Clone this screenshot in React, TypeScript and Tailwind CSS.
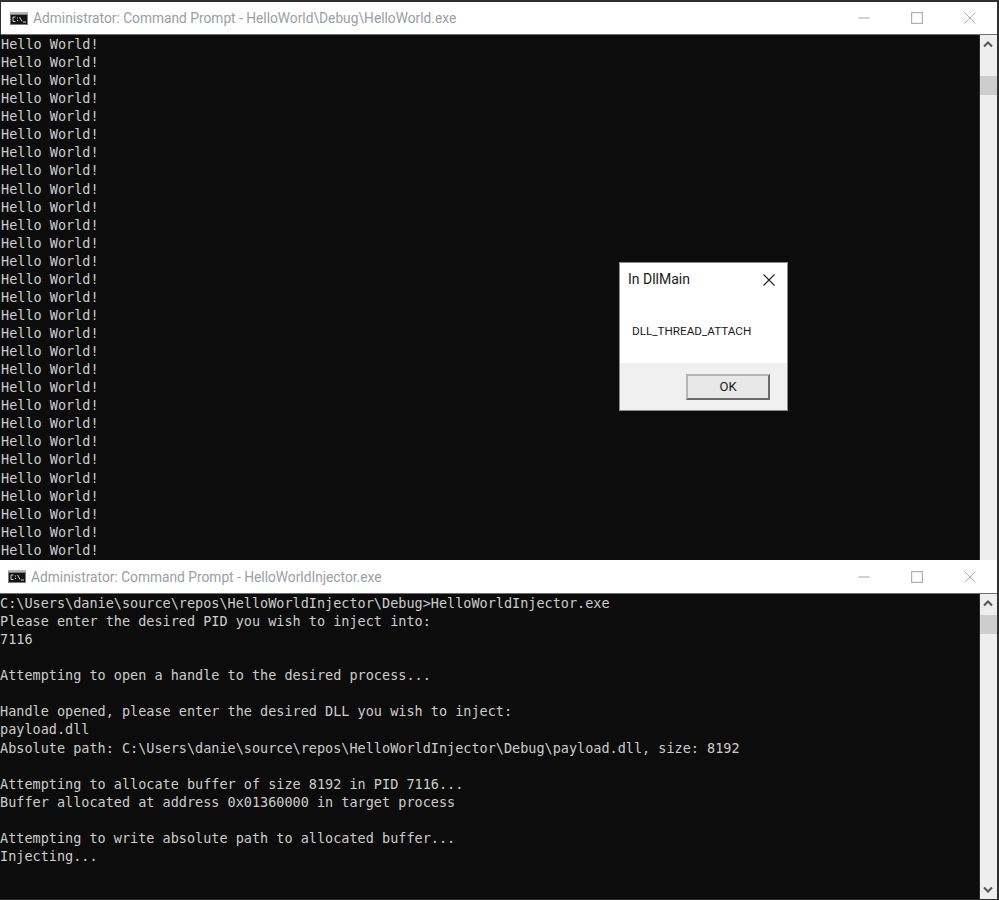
const bottomLines = [
  'C:\\Users\\danie\\source\\repos\\HelloWorldInjector\\Debug>HelloWorldInjector.exe',
  'Please enter the desired PID you wish to inject into:',
  '7116',
  '',
  'Attempting to open a handle to the desired process...',
  '',
  'Handle opened, please enter the desired DLL you wish to inject:',
  'payload.dll',
  'Absolute path: C:\\Users\\danie\\source\\repos\\HelloWorldInjector\\Debug\\payload.dll, size: 8192',
  '',
  'Attempting to allocate buffer of size 8192 in PID 7116...',
  'Buffer allocated at address 0x01360000 in target process',
  '',
  'Attempting to write absolute path to allocated buffer...',
  'Injecting...',
];

const helloLines = Array.from({ length: 29 }, () => 'Hello World!');

function CmdIcon() {
  return (
    <svg width="18" height="13" viewBox="0 0 18 13" className="shrink-0">
      <rect x="0" y="0" width="18" height="13" fill="#7d7d7d" />
      <rect x="0" y="0" width="18" height="2" fill="#b5b5b5" />
      <rect x="1" y="3" width="16" height="9" fill="#141414" />
      <path d="M5.5 5H3V9.5H5.5M7.5 5.5V6.5M7.5 8V9M9.5 5L12 9.5M13 10H16" fill="none" stroke="#d0d0d0" strokeWidth="1" />
    </svg>
  );
}

function WindowControls() {
  return (
    <div className="flex items-center shrink-0">
      <svg width="12" height="12" viewBox="0 0 12 12" className="mr-[41px]">
        <path d="M0.5 6H11.5" stroke="#b0b0b0" strokeWidth="1.2" />
      </svg>
      <svg width="12" height="12" viewBox="0 0 12 12" className="mr-[41px]">
        <rect x="0.6" y="0.6" width="10.8" height="10.8" fill="none" stroke="#b0b0b0" strokeWidth="1.2" />
      </svg>
      <svg width="12" height="12" viewBox="0 0 12 12" className="mr-[21px]">
        <path d="M0.5 0.5L11.5 11.5M11.5 0.5L0.5 11.5" stroke="#b0b0b0" strokeWidth="1" />
      </svg>
    </div>
  );
}

function TitleBar({ title, className }: { title: string; className: string }) {
  return (
    <div className={`flex items-center justify-between bg-white border-b border-[#6e6e6e] ${className}`}>
      <div className="flex items-center gap-[5px] text-[13.75px] text-[#9ba0a5] font-['Roboto',sans-serif] whitespace-nowrap">
        <CmdIcon />
        <span className="pt-[1px]">{title}</span>
      </div>
      <WindowControls />
    </div>
  );
}

function Scrollbar({ thumbTop, downArrow }: { thumbTop: string; downArrow: boolean }) {
  return (
    <div className="flex flex-col w-[18px] shrink-0 bg-[#eeeeee] border-l border-[#2a2a2a]">
      <div className="flex items-center justify-center h-[17px] pt-[2px] pr-[1px]">
        <svg width="10" height="7" viewBox="0 0 10 7">
          <path d="M1 5.5L5 1.5L9 5.5" fill="none" stroke="#555555" strokeWidth="2" />
        </svg>
      </div>
      <div className={`h-[19px] bg-[#cdcdcd] ${thumbTop}`} />
      <div className="flex-1" />
      {downArrow && (
        <div className="flex items-center justify-center h-[17px] pb-[2px] pr-[1px]">
          <svg width="10" height="7" viewBox="0 0 10 7">
            <path d="M1 1.5L5 5.5L9 1.5" fill="none" stroke="#555555" strokeWidth="2" />
          </svg>
        </div>
      )}
    </div>
  );
}

function Console({
  lines,
  height,
  thumbTop,
  downArrow,
  textInset,
}: {
  lines: string[];
  height: string;
  thumbTop: string;
  downArrow: boolean;
  textInset: string;
}) {
  return (
    <div className={`flex ${height}`}>
      <div className={`flex-1 overflow-hidden bg-[#0c0c0c] text-[#cccccc] text-[13.5px] leading-[18.07px] font-['DejaVu_Sans_Mono',monospace] ${textInset}`}>
        {lines.map((line, i) => (
          <div key={i} className="h-[18.07px] whitespace-pre">
            {line}
          </div>
        ))}
      </div>
      <Scrollbar thumbTop={thumbTop} downArrow={downArrow} />
    </div>
  );
}

function MessageBox() {
  return (
    <div className="absolute left-[619px] top-[262px] w-[169px] h-[149px] flex flex-col bg-white border border-[#8c8c8c] font-['Roboto',sans-serif] text-[#1a1a1a]">
      <div className="flex items-center justify-between pl-[8px] pr-[12px] pt-[6px] text-[14px]">
        <span>In DllMain</span>
        <svg width="12" height="12" viewBox="0 0 12 12">
          <path d="M0.5 0.5L11.5 11.5M11.5 0.5L0.5 11.5" stroke="#222222" strokeWidth="1.1" />
        </svg>
      </div>
      <div className="flex-1 pl-[12px] pt-[33px] text-[11.7px]">DLL_THREAD_ATTACH</div>
      <div className="flex items-center justify-end h-[47px] pr-[17px] bg-[#f0f0f0]">
        <div className="flex items-center justify-center w-[84px] h-[26px] bg-[#e8e8e8] border-2 border-t-[#b5b5b5] border-l-[#b5b5b5] border-r-[#6a6a6a] border-b-[#6a6a6a] text-[13px]">
          OK
        </div>
      </div>
    </div>
  );
}

export default function App() {
  return (
    <div className="relative w-[999px] h-[900px] overflow-hidden bg-[#2e2e2e] pt-[2px] pr-[2px]">
      <TitleBar title="Administrator: Command Prompt - HelloWorld\Debug\HelloWorld.exe" className="h-[33px] ml-[1px] pl-[9px]" />
      <Console lines={helloLines} height="h-[525px]" thumbTop="mt-[24px]" downArrow={false} textInset="pl-[1px]" />
      <TitleBar title="Administrator: Command Prompt - HelloWorldInjector.exe" className="h-[34px] pl-[8px]" />
      <Console lines={bottomLines} height="h-[305px]" thumbTop="mt-[4px]" downArrow textInset="pl-0" />
      <MessageBox />
    </div>
  );
}
